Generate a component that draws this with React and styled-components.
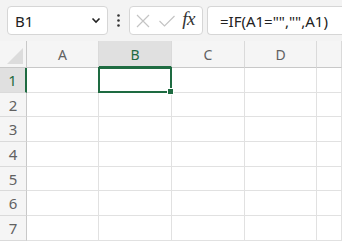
import React from 'react';
import styled, { createGlobalStyle } from 'styled-components';

const Global = createGlobalStyle`
  html, body { margin: 0; padding: 0; background: #ffffff; }
  body { font-family: "Segoe UI", "Noto Sans", "Noto Sans CJK JP", sans-serif; overflow: hidden; }
`;

const Page = styled.div`
  width: 342px;
  height: 244px;
  overflow: hidden;
  background: #ffffff;
`;

const Toolbar = styled.div`
  display: flex;
  align-items: center;
  height: 41px;
  padding: 0 0 0 7px;
  box-sizing: border-box;
  background: #f3f3f3;
`;

const Box = styled.div`
  display: flex;
  align-items: center;
  height: 29px;
  box-sizing: border-box;
  background: #ffffff;
  border: 1px solid #d6d6d6;
  border-radius: 4px;
`;

const NameBox = styled(Box)`
  width: 101px;
  padding: 0 6px 0 7px;
  justify-content: space-between;
  font-size: 15px;
  color: #222;
`;

const Dots = styled.div`
  width: 21px;
  display: flex;
  justify-content: center;
`;

const IconBox = styled(Box)`
  width: 74px;
  padding: 0 7px 0 5px;
  justify-content: space-between;
`;

const Fx = styled.span`
  font-family: "Liberation Serif", "DejaVu Serif", serif;
  font-style: italic;
  font-size: 19px;
  color: #333;
  letter-spacing: -0.5px;
  margin-top: -3px;
`;

const FormulaBox = styled(Box)`
  flex: 1;
  margin-left: 4px;
  padding-left: 12px;
  font-size: 15px;
  color: #222;
  border-right: none;
  border-radius: 4px 0 0 4px;
  white-space: nowrap;
`;

const Sheet = styled.div`
  display: grid;
  grid-template-columns: 27px 72px 73px 73px 72px 1fr;
  grid-template-rows: 27px 25px 24px 25px 25px 24px 25px 25px;
`;

const Cell = styled.div`
  position: relative;
  box-sizing: border-box;
  border-right: 1px solid #e1e1e1;
  border-bottom: 1px solid #e1e1e1;
  background: #ffffff;
`;

const ColHead = styled.div`
  display: flex;
  align-items: center;
  justify-content: center;
  box-sizing: border-box;
  font-size: 14px;
  color: ${p => (p.$active ? '#1e6b41' : '#616161')};
  background: ${p => (p.$active ? '#e0e0e0' : '#f5f5f5')};
  border-right: 1px solid #dadada;
  border-bottom: ${p => (p.$active ? '2px solid #1e6b41' : '1px solid #c8c8c8')};
  padding-top: ${p => (p.$active ? '1px' : '0')};
`;

const Corner = styled.div`
  position: relative;
  box-sizing: border-box;
  background: #f5f5f5;
  border-right: 1px solid #c8c8c8;
  border-bottom: 1px solid #c8c8c8;
`;

const Triangle = styled.div`
  position: absolute;
  right: 3px;
  bottom: 3px;
  width: 0;
  height: 0;
  border-left: 16px solid transparent;
  border-bottom: 16px solid #dcdcdc;
`;

const RowHead = styled.div`
  display: flex;
  align-items: center;
  justify-content: center;
  box-sizing: border-box;
  font-size: 15px;
  color: ${p => (p.$active ? '#1e6b41' : '#616161')};
  background: ${p => (p.$active ? '#e0e0e0' : '#f5f5f5')};
  border-bottom: 1px solid #dadada;
  border-right: ${p => (p.$active ? '2px solid #1e6b41' : '1px solid #c8c8c8')};
`;

const Selection = styled.div`
  position: absolute;
  left: -1px;
  top: -1px;
  right: -1px;
  bottom: -1px;
  border: 2px solid #1e6b41;
  pointer-events: none;
  z-index: 2;
`;

const Handle = styled.div`
  position: absolute;
  right: -4px;
  bottom: -4px;
  width: 5px;
  height: 5px;
  background: #1e6b41;
  border: 1px solid #ffffff;
`;

const cols = ['A', 'B', 'C', 'D', ''];
const rows = [1, 2, 3, 4, 5, 6, 7];

export default function App() {
  return (
    <Page>
      <Global />
      <Toolbar>
        <NameBox>
          <span>B1</span>
          <svg width="10" height="7" viewBox="0 0 10 7">
            <path d="M1.5 1.5 L5 5 L8.5 1.5" fill="none" stroke="#222" strokeWidth="1.6" />
          </svg>
        </NameBox>
        <Dots>
          <svg width="3" height="13" viewBox="0 0 3 13">
            <circle cx="1.5" cy="1.5" r="1.3" fill="#333" />
            <circle cx="1.5" cy="6.5" r="1.3" fill="#333" />
            <circle cx="1.5" cy="11.5" r="1.3" fill="#333" />
          </svg>
        </Dots>
        <IconBox>
          <svg width="16" height="16" viewBox="0 0 16 16">
            <path d="M2 2 L14 14 M14 2 L2 14" stroke="#c4c4c4" strokeWidth="1.2" />
          </svg>
          <svg width="18" height="16" viewBox="0 0 18 16">
            <path d="M1.5 8 L6.5 13 L16.5 3" fill="none" stroke="#c4c4c4" strokeWidth="1.2" />
          </svg>
          <Fx>fx</Fx>
        </IconBox>
        <FormulaBox>=IF(A1="","",A1)</FormulaBox>
      </Toolbar>
      <Sheet>
        <Corner>
          <Triangle />
        </Corner>
        {cols.map((c, i) => (
          <ColHead key={i} $active={c === 'B'}>{c}</ColHead>
        ))}
        {rows.map(r => (
          <React.Fragment key={r}>
            <RowHead $active={r === 1}>{r}</RowHead>
            {cols.map((c, i) => (
              <Cell key={i}>
                {r === 1 && c === 'B' && (
                  <Selection>
                    <Handle />
                  </Selection>
                )}
              </Cell>
            ))}
          </React.Fragment>
        ))}
      </Sheet>
    </Page>
  );
}
